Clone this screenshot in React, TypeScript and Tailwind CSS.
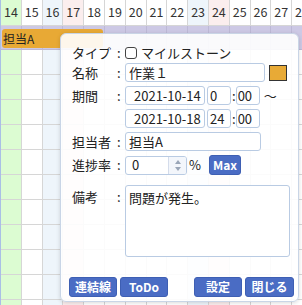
import React from "react";

const days = [14, 15, 16, 17, 18, 19, 20, 21, 22, 23, 24, 25, 26, 27, 28];

function colBg(d: number) {
  if (d === 14) return "bg-[#dcfcd2]";
  if (d === 16 || d === 23) return "bg-[#eef5fb]";
  if (d === 17 || d === 24) return "bg-[#fbeeee]";
  return "bg-white";
}

function Field({ className, children }: { className: string; children?: React.ReactNode }) {
  return (
    <div className={`h-[19px] border border-[#b9cbe3] rounded-[3px] bg-white flex items-center text-[13px] text-[#222] ${className}`}>
      {children}
    </div>
  );
}

function Label({ text }: { text: string }) {
  return (
    <div className="flex items-center w-[53px] shrink-0 text-[13px] text-[#222]">
      <span className="w-[45px]">{text}</span>
      <span>:</span>
    </div>
  );
}

function Btn({ children, className }: { children: React.ReactNode; className: string }) {
  return (
    <div className={`h-[20px] rounded-[3px] bg-[#4a6cc4] border border-[#3e5fb3] text-white text-[12px] font-bold flex items-center justify-center ${className}`}>
      {children}
    </div>
  );
}

export default function App() {
  return (
    <div
      className="relative w-[302px] h-[305px] overflow-hidden bg-white"
      style={{ fontFamily: '"Noto Sans CJK JP", "Noto Sans", sans-serif' }}
    >
      {/* gantt grid */}
      <div className="flex border-l border-[#a9bfe6]">
        {days.map((d) => (
          <div key={d} className={`w-[20.8px] shrink-0 flex flex-col ${colBg(d)}`}>
            <div className="h-[26px] border-b border-r border-[#d6d6d6] flex items-center justify-center text-[12.5px] text-[#333]">
              {d}
            </div>
            <div className="h-[24px] bg-[#cdc9e5] border-b border-r border-[#bdb9d6]" />
            {Array.from({ length: 11 }).map((_, i) => (
              <div key={i} className="h-[25px] border-b border-r border-[#d6d6d6]" />
            ))}
          </div>
        ))}
      </div>

      {/* task bar */}
      <div className="absolute left-[2px] top-[29px] w-[101px] h-[19px] rounded-[3px] bg-[#e8a935] text-[12px] text-[#222] flex items-center pl-[1px]">
        担当A
      </div>

      {/* edit popup */}
      <div className="absolute left-[60px] top-[33px] w-[239px] h-[269px] rounded-[6px] border border-[#c9d5e6] bg-white/90 shadow-[0_1px_4px_rgba(0,0,0,0.15)] pl-[11px] pt-[9px] flex flex-col">
        <div className="flex items-center h-[19px]">
          <Label text="タイプ" />
          <span className="w-[12px] h-[12px] border border-[#444] rounded-[3px] bg-white mr-[4px]" />
          <span className="text-[13px] text-[#222]">マイルストーン</span>
        </div>

        <div className="flex items-center h-[19px] mt-[1px]">
          <Label text="名称" />
          <Field className="w-[140px] pl-[3px]">作業１</Field>
          <span className="ml-[4px] w-[18px] h-[16px] bg-[#e8aa36] border border-[#333]" />
        </div>

        <div className="flex items-center h-[19px] mt-[4px]">
          <Label text="期間" />
          <Field className="w-[80px] pl-[8px]">2021-10-14</Field>
          <Field className="w-[24px] ml-[2px] pl-[2px]">0</Field>
          <span className="text-[13px] text-[#222] ml-[1px]">:</span>
          <Field className="w-[24px] pl-[1px]">00</Field>
          <span className="text-[13px] text-[#222] ml-[4px]">〜</span>
        </div>

        <div className="flex items-center h-[19px] mt-[4px]">
          <div className="w-[53px] shrink-0" />
          <Field className="w-[80px] pl-[8px]">2021-10-18</Field>
          <Field className="w-[24px] ml-[2px] pl-[2px]">24</Field>
          <span className="text-[13px] text-[#222] ml-[1px]">:</span>
          <Field className="w-[24px] pl-[1px]">00</Field>
        </div>

        <div className="flex items-center h-[19px] mt-[4px]">
          <Label text="担当者" />
          <Field className="w-[136px] pl-[3px]">担当A</Field>
        </div>

        <div className="flex items-center h-[22px] mt-[3px]">
          <Label text="進捗率" />
          <Field className="w-[62px] pl-[6px] justify-between overflow-hidden">
            <span>0</span>
            <span className="h-full w-[18px] border-l border-[#d4dceb] bg-[#f3f6fb] flex flex-col items-center justify-center gap-[3px]">
              <span className="w-0 h-0 border-l-[3px] border-r-[3px] border-b-[4px] border-l-transparent border-r-transparent border-b-[#9aa6b8]" />
              <span className="w-0 h-0 border-l-[3px] border-r-[3px] border-t-[4px] border-l-transparent border-r-transparent border-t-[#9aa6b8]" />
            </span>
          </Field>
          <span className="text-[13px] text-[#222] ml-[2px]">%</span>
          <Btn className="w-[32px] ml-[8px]">Max</Btn>
        </div>

        <div className="flex items-start mt-[9px]">
          <div className="pt-[2px]">
            <Label text="備考" />
          </div>
          <div className="w-[165px] h-[72px] border border-[#b9cbe3] rounded-[3px] bg-white text-[13px] text-[#222] pl-[3px] pt-[2px]">
            問題が発生。
          </div>
        </div>

        <div className="flex items-center mt-[20px]">
          <Btn className="w-[48px] ml-[-3px]">連結線</Btn>
          <Btn className="w-[48px] ml-[3px]">ToDo</Btn>
          <Btn className="w-[48px] ml-[26px]">設定</Btn>
          <Btn className="w-[49px] ml-[3px]">閉じる</Btn>
        </div>
      </div>
    </div>
  );
}
